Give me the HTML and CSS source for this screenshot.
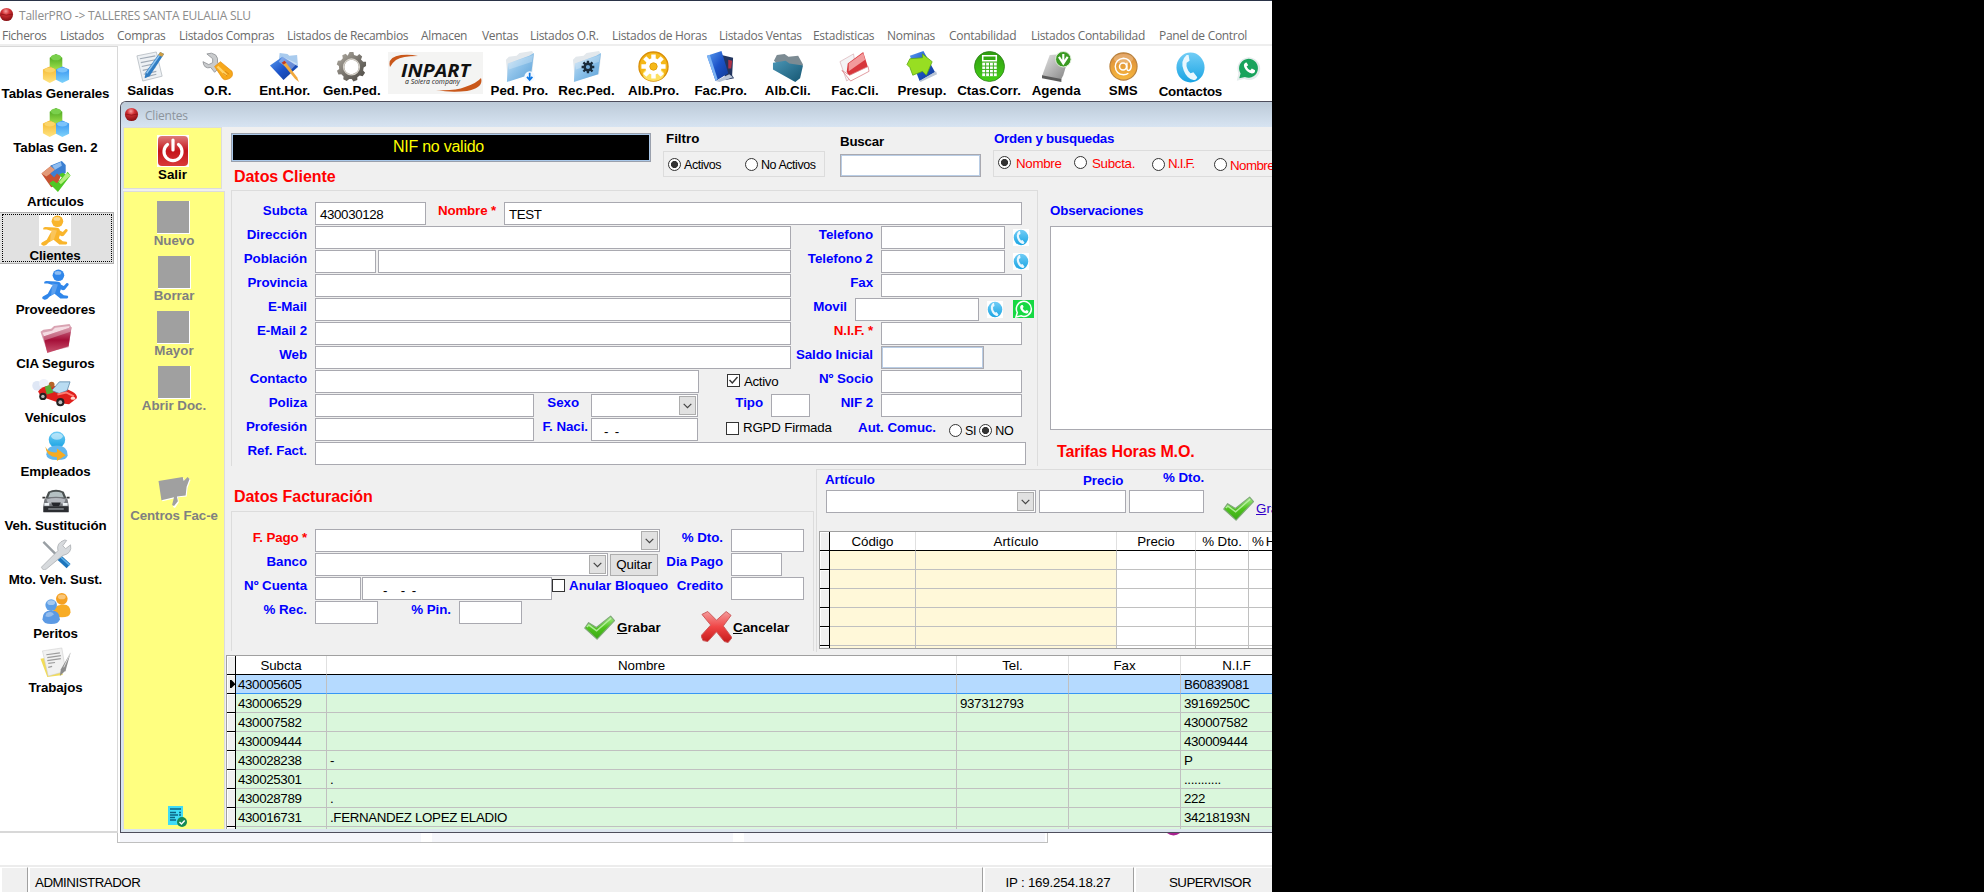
FILE: index.html
```html
<!DOCTYPE html>
<html lang="es">
<head>
<meta charset="utf-8">
<title>TallerPRO -&gt; TALLERES SANTA EULALIA SLU</title>
<link rel="stylesheet" href="styles.css">
</head>
<body>
<svg class="defs" width="0" height="0" aria-hidden="true">
  <defs>
    <radialGradient id="red" cx=".45" cy=".25" r=".7"><stop offset="0" stop-color="#f7a0a0"/><stop offset=".4" stop-color="#d22f33"/><stop offset="1" stop-color="#8c1216"/></radialGradient>
    <linearGradient id="green" x2="0" y2="1"><stop offset="0" stop-color="#3f9e1c"/><stop offset="1" stop-color="#a5e64e"/></linearGradient>
    <linearGradient id="tick" x2="0" y2="1"><stop offset="0" stop-color="#a6e98c"/><stop offset=".5" stop-color="#4fc41d"/><stop offset="1" stop-color="#3aa816"/></linearGradient>
    <linearGradient id="yellow" x2="0" y2="1"><stop offset="0" stop-color="#f4b52b"/><stop offset="1" stop-color="#ffe481"/></linearGradient>
    <linearGradient id="blue" x2="0" y2="1"><stop offset="0" stop-color="#2f8df0"/><stop offset="1" stop-color="#7fd3fb"/></linearGradient>
    <linearGradient id="sky" x2="0" y2="1"><stop offset="0" stop-color="#72cdf6"/><stop offset="1" stop-color="#19a4e3"/></linearGradient>
    <linearGradient id="folder" x1="0" x2="1" y2="1"><stop offset="0" stop-color="#cfe4f5"/><stop offset=".45" stop-color="#8fc3ea"/><stop offset="1" stop-color="#5a9fd6"/></linearGradient>
    <linearGradient id="navy" x2="1" y2="1"><stop offset="0" stop-color="#5b9df0"/><stop offset=".5" stop-color="#1c53c9"/><stop offset="1" stop-color="#123a91"/></linearGradient>
    <linearGradient id="teal" x2="1" y2="1"><stop offset="0" stop-color="#4a95b5"/><stop offset="1" stop-color="#155672"/></linearGradient>
    <linearGradient id="grey" x2="1" y2="1"><stop offset="0" stop-color="#e6e6e6"/><stop offset="1" stop-color="#7e7e7e"/></linearGradient>
    <linearGradient id="metal" x2="1" y2="1"><stop offset="0" stop-color="#b5b0a6"/><stop offset=".5" stop-color="#77736c"/><stop offset="1" stop-color="#4a4843"/></linearGradient>
    <linearGradient id="wine" x2="0" y2="1"><stop offset="0" stop-color="#c9728c"/><stop offset=".5" stop-color="#a50f38"/><stop offset="1" stop-color="#c9536f"/></linearGradient>
    <linearGradient id="crimson" x2="0" y2="1"><stop offset="0" stop-color="#f49c9c"/><stop offset=".5" stop-color="#f04545"/><stop offset="1" stop-color="#c41a1a"/></linearGradient>
    <linearGradient id="power" x2="0" y2="1"><stop offset="0" stop-color="#dd7a7a"/><stop offset=".5" stop-color="#c4141a"/><stop offset="1" stop-color="#d83a3a"/></linearGradient>
    <linearGradient id="leaf" x2="0" y2="1"><stop offset="0" stop-color="#2f9c10"/><stop offset="1" stop-color="#43cf16"/></linearGradient>
    <linearGradient id="amber" x2="0" y2="1"><stop offset="0" stop-color="#d9893a"/><stop offset="1" stop-color="#f7b73c"/></linearGradient>
    <symbol id="orb" viewBox="0 0 16 16"><circle cx="8" cy="8" r="7" fill="url(#red)"/><path d="M2 7.500Q8 10 14 7.500" stroke="#7b1013" stroke-width=".7" fill="none"/></symbol>
    <symbol id="cubes" viewBox="0 0 32 32">
      <path d="M9.500 5 16 1l6.500 4v9L16 18.500 9.500 14z" fill="url(#green)"/><ellipse cx="16" cy="4.500" rx="5.500" ry="3" fill="#7ad04c"/>
      <path d="M2.500 17 9.500 14l6.500 3v10.500L9.500 31 2.500 27z" fill="url(#yellow)"/><ellipse cx="9.500" cy="17.500" rx="5.500" ry="2.600" fill="#fbd56a"/>
      <path d="M16 17 22.500 14l7 3v10.500L22.500 31 16 27.500z" fill="url(#blue)"/><ellipse cx="22.500" cy="17.500" rx="5.500" ry="2.600" fill="#7cc3fb"/>
    </symbol>
    <symbol id="puzzle" viewBox="0 0 32 32">
      <path d="M1 13 12 4l5 6 5 3-5 12-6 2z" fill="#c65131"/><path d="M1 13 12 4l4 5-10 7z" fill="#e39a78"/>
      <path d="M10 5 22 0l4 4v8l-5 4-4-3-3 4-4-4 5-4z" fill="#3b7fd2"/><path d="m12 5 9-4 1 4-7 4z" fill="#8fbdf0"/>
      <path d="M31 15 18 32l-9-9 4-3 4 3 5-6-3-3 4-2 3 2 2-3z" fill="#4fc824"/><path d="m31 15-4-3-8 10 2 2z" fill="#b5ef7f"/>
    </symbol>
    <symbol id="man" viewBox="0 0 32 32">
      <circle cx="18.500" cy="6.500" r="6"/><path d="M4 15q-1-2 2-2.500l10 .5q5 0 5 3l3 1.500 3-3q2.500 0 2 2l-4 5q-2 1-4-.5l-1 3 4 3 4 .5q1.500 2-.5 3h-7l-6-5-5 3q-3 4-6 3-3-1-1-3l5-3 5-9-5-1.500z"/>
      <ellipse cx="18" cy="4" rx="3.500" ry="2" fill="#fff" opacity=".45"/><path d="M12 15l6 1-3 9-4 2z" fill="#fff" opacity=".22"/>
    </symbol>
    <symbol id="winefolder" viewBox="0 0 32 32"><path d="M0 9 3 7l8-1 3-3 16-2 2 4-3 20-22 5z" fill="#d9a3b2"/><path d="m2 10 10-2 3-3 15-2-1 4L4 14z" fill="#f4dce3"/><path d="M3 14 32 4l-3 20L7 31z" fill="url(#wine)"/><path d="M3 14 32 4l-1 5L4 18z" fill="#fff" opacity=".3"/></symbol>
    <symbol id="redcar" viewBox="0 0 48 32"><circle cx="5" cy="9" r="5" fill="#dfe7f5"/><circle cx="12" cy="7" r="5" fill="#eef2fa"/><path d="M6 15q4-6 13-6l12 1 10 5q6 3 5 7l-8 6-9-1-20-7z" fill="#df1f1c"/><path d="m20 14 8-9 11 0-3 9-8 3z" fill="#b9dcf2" stroke="#5b86a8" stroke-width=".8"/><circle cx="20" cy="8" r="3" fill="#b5652b"/><path d="m13 10 5-2 4 8-7 2z" fill="#58ad36"/><path d="m26 18 9-2 8 4" stroke="#ff7c72" fill="none" stroke-width="2"/><circle cx="11" cy="20" r="3.800" fill="#222"/><circle cx="11" cy="20" r="1.800" fill="#bbb"/><circle cx="29" cy="26" r="4.200" fill="#222"/><circle cx="29" cy="26" r="2" fill="#bbb"/><ellipse cx="42" cy="22" rx="2.500" ry="1.600" fill="#ffd9d0"/></symbol>
    <symbol id="employee" viewBox="0 0 32 32"><circle cx="17" cy="9" r="8.500" fill="url(#sky)"/><ellipse cx="17" cy="5.500" rx="6" ry="3.500" fill="#fff" opacity=".5"/><path d="M6 24q0-9 11-9t11 10q0 5-11 5T6 24z" fill="#63b7ee"/><path d="M5 16q3 7 12 6v-4l9 7-9 6v-4Q6 27 5 16z" fill="#f6ab23"/></symbol>
    <symbol id="greycar" viewBox="0 0 32 32"><path d="M8 7q8-4 16 0l3 7H5z" fill="#4a5050"/><path d="M10 8q6-2 12 0l2 5H8z" fill="#b4c0c2"/><path d="M4 15q2-3 12-3t12 3l1 6v7H3v-7z" fill="#74777c"/><path d="M6 15q10-3 20 0l-2 4H8z" fill="#b4b8be"/><path d="M11 18h10l-2 4h-6z" fill="#24262b"/><path d="M3 22h26v6H3z" fill="#2b2d31"/><path d="M4 18.500h5v3H4zm19 0h5v3h-5z" fill="#edf2f5"/><path d="M2 12h3v2H2zm25 0h3v2h-3z" fill="#333"/><path d="M8 24h16v1.500H8z" fill="#8b8f94"/></symbol>
    <symbol id="tools" viewBox="0 0 32 32"><path d="m3 3 15 15" stroke="#999fa4" stroke-width="2.500"/><path d="m18 18 11 10" stroke="#1d75bd" stroke-width="6"/><path d="m19 17 11 10" stroke="#5fb0e6" stroke-width="1.500"/><path d="M18 12q-2-8 7-11l2 .500-4 5.500 3 3 5-4q2 9-8 11L6 31q-4 2-5-2z" fill="#d7dadd" stroke="#a9adb1" stroke-width=".8"/></symbol>
    <symbol id="experts" viewBox="0 0 32 32"><circle cx="22" cy="6" r="6" fill="#f5a021"/><ellipse cx="22" cy="4" rx="4" ry="2.500" fill="#fff" opacity=".4"/><path d="M13 19q0-6 9-7t9 8q-1 5-9 5t-9-6z" fill="#f8ac25"/><circle cx="11" cy="12.500" r="6" fill="#5e9fe6"/><ellipse cx="11" cy="10" rx="4" ry="2.500" fill="#fff" opacity=".45"/><path d="M2 27q0-9 9-9t9 9q-1 5-9 5t-9-5z" fill="#5c9ae4"/><path d="M6 21q5-3 8 1-4 4-9 2z" fill="#fff" opacity=".35"/></symbol>
    <symbol id="jobs" viewBox="0 0 32 32"><path d="m0 12 18-3 5 20-16 2z" fill="#f2dc58"/><path d="m2 4 20-3 4 24-18 5z" fill="#f1f1f1" stroke="#cfcfcf" stroke-width=".6"/><path d="m6 8 14-2M7 11l14-2M7 14l14-2M8 17l7-1M8 21l4-1" stroke="#9c9c9c" fill="none" stroke-width="1.300"/><path d="m31 6-5 18-6 6 1-7z" fill="#8c8c8c"/><path d="m31 6-7 15" stroke="#ddd"/></symbol>
    <symbol id="note" viewBox="0 0 32 32"><path d="m2 5 20-4 6 25-20 5z" fill="#eef1f4" stroke="#b3b9c0" stroke-width=".8"/><path d="m5 8 16-3M6 12l15-3M7 16l14-3M8 20l13-3M9 24l13-3M10 27l12-3" stroke="#9fa9b5" stroke-width="1.200"/><path d="m26 1 4 2-15 23-5 2 1-6z" fill="#2f7cc2"/><path d="m27 2-15 21" stroke="#91c5ef" stroke-width="1.500"/><path d="m26 1 4 2-2 3-4-2z" fill="#cf9f45"/></symbol>
    <symbol id="wrench" viewBox="0 0 32 32"><path d="M5 3q5-2 9 1 3 3 2 8l4 3-7 7-4-5Q2 19 1 11l6 3 4-2 0-4z" fill="#c9cbcd" stroke="#898c90" stroke-width=".8"/><path d="m13 16 6-5 12 10q2 6-4 8-4 2-6-1z" fill="#f7a81b" stroke="#e18d10" stroke-width=".7"/><path d="m16 16 9 9" stroke="#ffd46b" stroke-width="2.500"/><path d="m24 21 4 3m-6-1 4 3" stroke="#d98410" stroke-width="1"/></symbol>
    <symbol id="entry" viewBox="0 0 32 32"><path d="m11 2 8 1 2 2 8-1 1 13-12 8-9-5z" fill="#a9cbee"/><path d="m1 15 13-9 16 10-15 14z" fill="url(#navy)"/><path d="m14 6 15 7-7 7-12-9z" fill="#fff" opacity=".35"/><path d="m16 10 13 17 2 5-4-3-13-16z" fill="#f2a93c"/><path d="m16 10-3 2 2 2 3-2z" fill="#c43b25"/></symbol>
    <symbol id="gear" viewBox="0 0 32 32"><path fill-rule="evenodd" d="m14 1 4 0 .6 3 3.200 1.200L24 3l3 2.800-1.200 2.900L28 11h3v4.500L28.500 17 28 20l2 2.500-2.500 3.500-3-.8-2.500 2L22 30l-4 1.500-1.800-2.500h-2.400L11 31l-3.500-1.800.3-3L5.500 24l-3 .2L1 20.500 3.300 18.500 3 15.500.8 14 2 10l3-.2L7 7.500 6.500 4.500 10 2.800 12 5zM16 9a7.500 7.500 0 1 0 .1 15A7.500 7.500 0 0 0 16 9z" fill="url(#metal)"/><circle cx="16" cy="16.500" r="8.200" fill="none" stroke="#d5d1c9" stroke-width="1.400"/></symbol>
    <symbol id="ordfolder" viewBox="0 0 32 32"><path d="m2 9 3-3 8-1 3-3 13-2 2 4-2 20-25 7z" fill="#e3e8ec"/><path d="m4 13 22-8 5-3-3 22-25 8z" fill="url(#folder)"/><path d="m4 13 26-9-1 7-24 8z" fill="#fff" opacity=".25"/></symbol>
    <symbol id="minigear" viewBox="0 0 16 16"><path d="M8 1v14M1 8h14M3 3l10 10M13 3 3 13" stroke="#182a3a" stroke-width="2.600"/><circle cx="8" cy="8" r="3.600" fill="#6fa9d8" stroke="#182a3a" stroke-width="2.600"/></symbol>
    <symbol id="sungear" viewBox="0 0 32 32"><circle cx="16" cy="16" r="15" fill="#f5b818" stroke="#d98f08" stroke-width="1.400"/><ellipse cx="16" cy="24" rx="11" ry="7" fill="#fde060"/><path d="M16 3.500v25M3.500 16h25M7 7l18 18M25 7 7 25" stroke="#fff" stroke-width="4.600"/><circle cx="16" cy="16" r="8.500" fill="#fff"/><circle cx="16" cy="16" r="3.800" fill="#f5b818" stroke="#e2a010"/></symbol>
    <symbol id="bluebooks" viewBox="0 0 32 32"><path d="m17 4 12 3-1 18 2 3-9 2z" fill="#22355f"/><path d="m24 9 4 1-1 8-3 0z" fill="#ae3347"/><path d="m2 5 15-5 7 23-13 8z" fill="url(#navy)"/><path d="m2 5 3-1 8 25-2 2z" fill="#7db4f4"/><path d="m11 31 14-7 4 3-14 5z" fill="#b9c5d6"/></symbol>
    <symbol id="tealfolder" viewBox="0 0 32 32"><path d="m2 10 3-6 8-1 4 3 10-1 5 9-8 16z" fill="#7c8b93"/><path d="m1 12 13-2 4 3 14 2-3 13-5 4L1 19z" fill="url(#teal)"/></symbol>
    <symbol id="redfolder" viewBox="0 0 32 32"><path d="m1 11 14-8 3 20-10 8z" fill="#f4f4f6" stroke="#d9aeb3" stroke-width=".7"/><path d="m8 21 1-8L25 1l5 16-19 12z" fill="#d7363c"/><path d="m10 13 15-11 2 7-17 12z" fill="#f29b9c"/><path d="m3 20 8 5 19-9 1 5-19 10z" fill="#fff" stroke="#d98087" stroke-width=".8"/></symbol>
    <symbol id="quote" viewBox="0 0 32 32"><path d="m4 5 14-5 12 22-16 9z" fill="url(#navy)"/><path d="m14 31 17-10 1 3-17 8z" fill="#b9c5d6"/><path d="m1 14 3-6 13-1 0-4 10 8-6 14-4-4-10 4-3-8z" fill="#98de22" stroke="#5ba713" stroke-width=".8"/></symbol>
    <symbol id="calc" viewBox="0 0 32 32"><circle cx="16" cy="16" r="15.500" fill="url(#leaf)" stroke="#2b7d17" stroke-width=".8"/><path d="M9 5h14v5H9z" fill="none" stroke="#fff" stroke-width="1.600"/><path d="M8.500 12h15v14h-15z" fill="#fff"/><path d="M12 12v14m4-14v14m4-14v14M8 15.500h16m-16 3.500h16m-16 3.500h16" stroke="#37ab18"/></symbol>
    <symbol id="drive" viewBox="0 0 32 32"><path d="m9 4 15-1 5 2-6 20-3 6L1 26z" fill="url(#grey)"/><path d="m1 25 20 4 0 3-20-4z" fill="#5a5a5a"/><circle cx="23" cy="8.500" r="8" fill="#3a9a22" stroke="#e2eedd"/><path d="m18.500 6 4.500 7 4.500-7M23 3v9" stroke="#fff" stroke-width="2.200" fill="none"/></symbol>
    <symbol id="at" viewBox="0 0 32 32"><circle cx="16" cy="16" r="14" fill="url(#amber)" stroke="#b9803b" stroke-width="1.200"/><ellipse cx="16" cy="8" rx="10" ry="5" fill="#fff" opacity=".25"/><circle cx="15.500" cy="16" r="3.600" fill="none" stroke="#fff" stroke-width="1.600"/><path d="M19.500 12v6q0 2.500 2.500 2 2-1 2-5-1-7-8-7.500-8 1-8.500 8.500.5 8 8.500 8.500 3 0 5-1.500" fill="none" stroke="#fff" stroke-width="1.500"/></symbol>
    <symbol id="phone" viewBox="0 0 32 32"><ellipse cx="16" cy="16" rx="14.500" ry="15.500" fill="url(#sky)"/><path d="M12 3Q5 9 9 19q3 8 10 10 3 0 4-3l-4-5-3 1q-5-5-4-11l3-2-1-6z" fill="#e9f7fe"/></symbol>
    <symbol id="wa" viewBox="0 0 32 32"><path d="m1 31 2-9A14 14 0 1 1 10 29z" fill="#e4ecec"/><path d="m4 28 1.600-6A11.600 11.600 0 1 1 11 26.500z" fill="#18a35c"/><path d="M11.500 9q-3 2-1 6 3 6 9 7 4 0 4-4l-4-2-2 2q-3-1-4.500-4.500L15 12l-2-3.500z" fill="#fff"/></symbol>
    <symbol id="wasq" viewBox="0 0 21 18"><path d="M0 0h21v18H0z" fill="#16d943"/><path d="m3 17 1.300-4.500A7.500 7.500 0 1 1 8 15.800z" fill="#16d943" stroke="#fff" stroke-width="1.500"/><path d="M8.500 5q-2 1-1 4 2 4 6 4.500 2 0 2-2.500l-2-1-1.300 1q-2-1-2.500-3l1-1-1-2z" fill="#fff"/></symbol>
    <symbol id="check" viewBox="0 0 32 25"><path d="m.8 13 4-5.500 8 5L27.500.8l4 4.500L13.500 24.500z" fill="url(#tick)" stroke="#7fa878" stroke-width="1.200" stroke-linejoin="round"/><path d="m3 12 2-2 8 6L28 3" stroke="#c6f5b4" stroke-width="1.500" fill="none" opacity=".8"/></symbol>
    <symbol id="cross" viewBox="0 0 32 32"><path d="m1 3 6-3 9 9 10-9 5 4-8 11 9 12-4 5-4-1-8-10-9 10-5-1-2-5 10-11z" fill="url(#crimson)" stroke="#c95a5a" stroke-width="1"/></symbol>
    <symbol id="powerbtn" viewBox="0 0 32 32"><path d="M0 0h32v32H0z" fill="#fff"/><rect x="1" y="1" width="30" height="30" rx="4" fill="url(#power)"/><path d="M10.500 9.500a9 9 0 1 0 11 0" fill="none" stroke="#fff" stroke-width="3.200" stroke-linecap="round"/><path d="M16 5v10" stroke="#fff" stroke-width="3.200" stroke-linecap="round"/></symbol>
    <symbol id="thumb" viewBox="0 0 33 32"><path d="M1 5 26 1l1 4 4-4 2 2-3 8-1 9-9 1 1 5-4 6-2-1 2-9-13 3z" fill="#fff"/><path d="M0 4 25 0l1 4 4-4 2 2-3 8-1 9-9 1 1 5-4 5-2-1 2-8-13 3z" fill="#a0a0a0"/></symbol>
    <symbol id="doc" viewBox="0 0 19 21"><path d="M0 0h15v19H0z" fill="#40dcf6"/><path d="M2 3h11M2 6.500h6M2 9h8M2 11.500h5M2 14h6M11 6.500h2M11 9h2" stroke="#0b6485" stroke-width="1.400"/><circle cx="14" cy="16" r="5" fill="#168a55"/><path d="m11.500 16 2 2 3.200-3.500" stroke="#fff" stroke-width="1.400" fill="none"/></symbol>
    <symbol id="chev" viewBox="0 0 9 6"><path d="m.7.800 3.800 3.900L8.300.800" fill="none" stroke="#444" stroke-width="1.200"/></symbol>
  </defs>
</svg>

<div class="app">
  <header class="titlebar"><svg class="orb"><use href="#orb"/></svg><span>TallerPRO -&gt; TALLERES SANTA EULALIA SLU</span></header>
  <nav class="menu">
    <span>Ficheros</span><span>Listados</span><span>Compras</span><span>Listados Compras</span><span>Listados de Recambios</span><span>Almacen</span><span>Ventas</span><span>Listados O.R.</span><span>Listados de Horas</span><span>Listados Ventas</span><span>Estadisticas</span><span>Nominas</span><span>Contabilidad</span><span>Listados Contabilidad</span><span>Panel de Control</span>
  </nav>

  <div class="main">
    <aside class="sidebar">
      <div class="side"><svg><use href="#cubes"/></svg><b>Tablas Generales</b></div>
      <div class="side"><svg><use href="#cubes"/></svg><b>Tablas Gen. 2</b></div>
      <div class="side"><svg><use href="#puzzle"/></svg><b>Artículos</b></div>
      <div class="side active"><svg class="orange"><use href="#man"/></svg><b>Clientes</b></div>
      <div class="side"><svg class="azure"><use href="#man"/></svg><b>Proveedores</b></div>
      <div class="side"><svg><use href="#winefolder"/></svg><b>CIA Seguros</b></div>
      <div class="side"><svg class="wide"><use href="#redcar"/></svg><b>Vehículos</b></div>
      <div class="side"><svg><use href="#employee"/></svg><b>Empleados</b></div>
      <div class="side"><svg><use href="#greycar"/></svg><b>Veh. Sustitución</b></div>
      <div class="side"><svg><use href="#tools"/></svg><b>Mto. Veh. Sust.</b></div>
      <div class="side"><svg><use href="#experts"/></svg><b>Peritos</b></div>
      <div class="side"><svg><use href="#jobs"/></svg><b>Trabajos</b></div>
    </aside>

    <div class="workspace">
      <div class="toolbar">
        <div class="tool"><svg><use href="#note"/></svg><b>Salidas</b></div>
        <div class="tool"><svg><use href="#wrench"/></svg><b>O.R.</b></div>
        <div class="tool"><svg><use href="#entry"/></svg><b>Ent.Hor.</b></div>
        <div class="tool"><svg><use href="#gear"/></svg><b>Gen.Ped.</b></div>
        <svg class="inpart" viewBox="0 0 95 42">
          <path d="M0 0h95v42H0z" fill="#f4f4f3"/>
          <path d="M2 15Q-1 5 13 3q9-1 17 1Q14 4 8 8q-4 3-6 7z" fill="#c9571a"/>
          <path d="M93 26q3 10-14 13-16 2-31-1 19 1 29-3 12-4 16-9z" fill="#c9571a"/>
          <text x="13" y="25" class="logo-name" textLength="69" lengthAdjust="spacingAndGlyphs">INPART</text>
          <text x="17" y="32" class="logo-sub" textLength="55" lengthAdjust="spacingAndGlyphs">a Solera company</text>
        </svg>
        <div class="tool"><svg viewBox="0 0 32 32"><use href="#ordfolder"/><circle cx="26.500" cy="26.500" r="5.500" fill="#f4f9ff"/><path d="M26.500 22.500v7m-2.800-2.700 2.800 3 2.800-3" stroke="#0c78e6" stroke-width="1.800" fill="none"/></svg><b>Ped. Pro.</b></div>
        <div class="tool"><svg viewBox="0 0 32 32"><use href="#ordfolder"/><use href="#minigear" x="10" y="9" width="15" height="15"/></svg><b>Rec.Ped.</b></div>
        <div class="tool"><svg><use href="#sungear"/></svg><b>Alb.Pro.</b></div>
        <div class="tool"><svg><use href="#bluebooks"/></svg><b>Fac.Pro.</b></div>
        <div class="tool"><svg><use href="#tealfolder"/></svg><b>Alb.Cli.</b></div>
        <div class="tool"><svg><use href="#redfolder"/></svg><b>Fac.Cli.</b></div>
        <div class="tool"><svg><use href="#quote"/></svg><b>Presup.</b></div>
        <div class="tool"><svg><use href="#calc"/></svg><b>Ctas.Corr.</b></div>
        <div class="tool"><svg><use href="#drive"/></svg><b>Agenda</b></div>
        <div class="tool"><svg><use href="#at"/></svg><b>SMS</b></div>
        <div class="tool contacts"><svg><use href="#phone"/></svg><b>Contactos</b></div>
        <svg class="wa-tool"><use href="#wa"/></svg>
      </div>

      <section class="window">
        <div class="wintitle"><svg class="orb"><use href="#orb"/></svg><span>Clientes</span></div>
        <div class="winbody">
          <div class="actions">
            <div class="exit"><svg><use href="#powerbtn"/></svg><b>Salir</b></div>
            <div class="stack">
              <div class="act"><i class="blank"></i><b>Nuevo</b></div>
              <div class="act"><i class="blank"></i><b>Borrar</b></div>
              <div class="act"><i class="blank"></i><b>Mayor</b></div>
              <div class="act"><i class="blank"></i><b>Abrir Doc.</b></div>
              <div class="act efac"><svg><use href="#thumb"/></svg><b>Centros Fac-e</b></div>
              <svg class="doc"><use href="#doc"/></svg>
            </div>
          </div>

          <div class="content">
            <div class="searchbar">
              <div class="status-col"><div class="alert">NIF no valido</div><h2>Datos Cliente</h2></div>
              <div class="filter">
                <b>Filtro</b>
                <div class="box"><i class="radio on"></i><span class="active-opt">Activos</span><i class="radio"></i><span>No Activos</span></div>
              </div>
              <div class="find"><b>Buscar</b><div class="field focus"></div></div>
              <div class="order">
                <b>Orden y busquedas</b>
                <div class="box"><i class="radio on"></i><span class="o1">Nombre</span><i class="radio"></i><span class="o2">Subcta.</span><i class="radio low"></i><span class="o3">N.I.F.</span><i class="radio low"></i><span class="o4">Nombre</span></div>
              </div>
            </div>

            <div class="client">
              <div class="group client-form">
                <div class="row r1"><label>Subcta</label><div class="field">430030128</div><label class="req">Nombre *</label><div class="field">TEST</div></div>
                <div class="row r2"><label>Dirección</label><div class="field"></div><label>Telefono</label><div class="field"></div><svg class="ph"><use href="#phone"/></svg></div>
                <div class="row r3"><label>Población</label><div class="field"></div><div class="field"></div><label>Telefono 2</label><div class="field"></div><svg class="ph"><use href="#phone"/></svg></div>
                <div class="row r4"><label>Provincia</label><div class="field"></div><label>Fax</label><div class="field"></div></div>
                <div class="row r5"><label>E-Mail</label><div class="field"></div><label>Movil</label><div class="field"></div><svg class="ph"><use href="#phone"/></svg><svg class="wasq"><use href="#wasq"/></svg></div>
                <div class="row r4"><label>E-Mail 2</label><div class="field"></div><label class="req nif">N.I.F. *</label><div class="field"></div></div>
                <div class="row r7"><label>Web</label><div class="field"></div><label>Saldo Inicial</label><div class="field focus"></div></div>
                <div class="row r8"><label>Contacto</label><div class="field"></div><div class="chk"><i class="checkbox"><svg viewBox="0 0 11 11"><path d="m1.500 5 2.800 3L9.500 2" fill="none" stroke="#333" stroke-width="1.400"/></svg></i>Activo</div><label>Nº Socio</label><div class="field"></div></div>
                <div class="row r9"><label>Poliza</label><div class="field"></div><label class="sexo">Sexo</label><div class="field combo"><i><svg><use href="#chev"/></svg></i></div><label>Tipo</label><div class="field"></div><label>NIF 2</label><div class="field"></div></div>
                <div class="row r10"><label>Profesión</label><div class="field"></div><label class="naci">F. Naci.</label><div class="field date">-&nbsp; -</div><div class="chk"><i class="checkbox"></i>RGPD Firmada</div><label class="aut">Aut. Comuc.</label><div class="sino"><i class="radio"></i><span>SI</span><i class="radio on"></i><span>NO</span></div></div>
                <div class="row r11"><label>Ref. Fact.</label><div class="field"></div></div>
              </div>
              <div class="notes"><b>Observaciones</b><div class="textarea"></div><h2>Tarifas Horas M.O.</h2></div>
            </div>

            <div class="lower">
              <div class="billing">
                <h2>Datos Facturación</h2>
                <div class="group bill-form">
                  <div class="row b1"><label class="req">F. Pago *</label><div class="field combo"><i><svg><use href="#chev"/></svg></i></div><label>% Dto.</label><div class="field"></div></div>
                  <div class="row b2"><label>Banco</label><div class="field combo"><i><svg><use href="#chev"/></svg></i></div><div class="btn">Quitar</div><label>Dia Pago</label><div class="field"></div></div>
                  <div class="row b3"><label>Nº Cuenta</label><div class="field"></div><div class="field acct">-&nbsp;&nbsp;&nbsp; -&nbsp; -</div><div class="chk bold"><i class="checkbox"></i>Anular Bloqueo</div><label>Credito</label><div class="field"></div></div>
                  <div class="row b4"><label>% Rec.</label><div class="field"></div><label>% Pin.</label><div class="field"></div><div class="save"><svg class="ok"><use href="#check"/></svg><b><u>G</u>rabar</b></div><div class="cancel"><svg class="ko"><use href="#cross"/></svg><b><u>C</u>ancelar</b></div></div>
                </div>
              </div>
              <div class="group rates">
                <div class="rate-labels"><b>Artículo</b><b class="rp">Precio</b><b class="rd">% Dto.</b></div>
                <div class="rate-fields"><div class="field combo"><i><svg><use href="#chev"/></svg></i></div><div class="field"></div><div class="field"></div><div class="link"><svg class="ok"><use href="#check"/></svg><span><u>G</u>rabar</span></div></div>
                <div class="grid rate-grid">
                  <div class="gr head"><i></i><span>Código</span><span>Artículo</span><span>Precio</span><span>% Dto.</span><span class="hours">% H</span></div>
                  <div class="gr"><i></i><span></span><span></span><span></span><span></span><span></span></div>
                  <div class="gr"><i></i><span></span><span></span><span></span><span></span><span></span></div>
                  <div class="gr"><i></i><span></span><span></span><span></span><span></span><span></span></div>
                  <div class="gr"><i></i><span></span><span></span><span></span><span></span><span></span></div>
                  <div class="gr"><i></i><span></span><span></span><span></span><span></span><span></span></div>
                  <div class="gr"><i></i><span></span><span></span><span></span><span></span><span></span></div>
                </div>
              </div>
            </div>

            <div class="grid client-grid">
              <div class="gr head"><i></i><span>Subcta</span><span>Nombre</span><span>Tel.</span><span>Fax</span><span>N.I.F</span></div>
              <div class="gr sel"><i><svg viewBox="0 0 5 8"><path d="M0 0h1.500L5 3.500v1L1.500 8H0z"/></svg></i><span>430005605</span><span></span><span></span><span></span><span>B60839081</span></div>
              <div class="gr"><i></i><span>430006529</span><span></span><span>937312793</span><span></span><span>39169250C</span></div>
              <div class="gr"><i></i><span>430007582</span><span></span><span></span><span></span><span>430007582</span></div>
              <div class="gr"><i></i><span>430009444</span><span></span><span></span><span></span><span>430009444</span></div>
              <div class="gr"><i></i><span>430028238</span><span>-</span><span></span><span></span><span>P</span></div>
              <div class="gr"><i></i><span>430025301</span><span>.</span><span></span><span></span><span>...........</span></div>
              <div class="gr"><i></i><span>430028789</span><span>.</span><span></span><span></span><span>222</span></div>
              <div class="gr"><i></i><span>430016731</span><span>.FERNANDEZ LOPEZ ELADIO</span><span></span><span></span><span>34218193N</span></div>
              <div class="gr"><i></i><span></span><span></span><span></span><span></span><span></span></div>
            </div>
          </div>
        </div>
      </section>
    </div>
  </div>

  <div class="desktop"><div class="strip"><i></i><i></i><i></i></div><svg class="blob" viewBox="0 0 14 3"><path d="M0 0h14q-3 2.500-7 2.500T0 0z" fill="#a8218f"/></svg></div>
  <footer class="statusbar"><span></span><span>ADMINISTRADOR</span><span>IP : 169.254.18.27</span><span>SUPERVISOR</span></footer>
</div>
</body>
</html>
```
FILE: styles.css
```css
* { box-sizing: border-box; }
body { margin: 0; background: #000; width: 1984px; height: 892px; overflow: hidden; font: 13.33px/16px "Liberation Sans", Arial, sans-serif; color: #000; }
.defs { display: block; height: 0; }
svg { display: block; flex: none; }
i { display: block; flex: none; font-style: normal; }
h2 { margin: 0; font-size: 16px; line-height: 20px; color: #f00; font-weight: bold; white-space: nowrap; letter-spacing: -.05px; }

.app { width: 1272px; height: 892px; background: #fff; display: flex; flex-direction: column; overflow: hidden; }
.titlebar { height: 25px; border-top: 1px solid #2a3347; display: flex; align-items: center; padding-top: 6px; font: 12px/16px "Open Sans", sans-serif; color: #8c8c8c; }
.orb { width: 15px; height: 15px; }
.titlebar .orb { margin: -3px 5px 0 -1px; }
.titlebar span { letter-spacing: -.23px; }
.menu { height: 21px; border-bottom: 2px solid #eee; display: grid; grid-template-columns: 58px 57px 62px 108px 134px 61px 48px 82px 107px 94px 74px 62px 82px 128px 100px; padding-left: 2px; font: 12px/22px "Open Sans", sans-serif; letter-spacing: -.3px; color: #6a6a6a; white-space: nowrap; }

.main { height: 787px; display: flex; }
.sidebar { width: 118px; border: 1px solid #d8d8d8; border-left: 0; border-bottom-width: 2px; padding-top: 3px; margin-right: 2px; }
.side { width: 114px; height: 52px; margin: 0 0 2px; display: flex; flex-direction: column; align-items: center; padding: 3px 3px 0 0; letter-spacing: -.1px; }
.side svg { width: 32px; height: 31px; }
.side svg.wide { width: 47px; }
.side b { line-height: 16px; white-space: nowrap; margin-top: 2px; }
.active { background: #e1e1e1; border: 1px solid #adadad; border-left: 0; outline: 1px dotted #000; outline-offset: -3px; padding-top: 2px; }
.active svg { background: #fff; }
.orange { fill: #f9b52c; }
.azure { fill: #2f86ea; }

.workspace { width: 1152px; display: flex; flex-direction: column; }
.toolbar { height: 55px; display: flex; padding-top: 5px; margin-left: -3px; }
.tool { width: 67.100px; flex: none; display: flex; flex-direction: column; align-items: center; }
.tool svg { width: 31px; height: 31px; }
.tool b { margin-top: 1px; line-height: 16px; white-space: nowrap; }
.contacts { padding-top: 1px; letter-spacing: -.2px; }
.inpart { width: 95px; height: 42px; margin: 1px 2.500px 0 3px; }
.logo-name { font: italic bold 18px "Open Sans", sans-serif; fill: #111; }
.logo-sub { font: italic 7.500px "Open Sans", sans-serif; fill: #222; }
.wa-tool { width: 26px; height: 27px; margin: 4px 0 0 12px; }

.window { height: 732px; border: 1px solid #4d4d5c; border-width: 1px 0 1px 1px; border-top-left-radius: 6px; overflow: hidden; background: #f0f0f0; }
.wintitle { height: 25px; display: flex; align-items: center; padding-left: 3px; background: linear-gradient(#bccad8, #d7e4f2); font: 12px/16px "Open Sans", sans-serif; color: #8c949c; letter-spacing: -.2px; }
.wintitle .orb { margin-right: 6px; }
.wintitle span { padding-top: 2px; }
.winbody { height: 705px; display: flex; border-left: 2px solid #d7e4f2; border-bottom: 3px solid #dce6ee; }
.actions { width: 103px; flex: none; }
.exit { width: 99px; height: 62px; background: #ffff80; border: 1px solid #dcdcdc; display: flex; flex-direction: column; align-items: center; padding-top: 7px; }
.exit svg { width: 32px; height: 32px; }
.exit b { line-height: 16px; }
.stack { width: 102px; height: 638px; margin-top: 2px; background: #ffff80; border: 1px solid #dcdcdc; border-width: 1px 1px 0 1px; padding-top: 9px; display: flex; flex-direction: column; align-items: center; }
.act { height: 55px; display: flex; flex-direction: column; align-items: center; color: #808080; }
.act b { line-height: 14px; white-space: nowrap; }
.blank { width: 33px; height: 33px; background: #a0a0a0; border-right: 1px solid #fff; border-bottom: 1px solid #fff; }
.efac { margin-top: 56px; }
.efac svg { width: 33px; height: 31px; }
.efac b { margin-top: 1px; letter-spacing: -.1px; }
.doc { width: 19px; height: 21px; margin: 274px 0 0 6px; }

.content { width: 1046px; flex: none; display: flex; flex-direction: column; height: 702px; overflow: hidden; }
.field { background: #fff; border: 1px solid #a9a9b0; height: 23px; padding: 3px 0 0 4px; line-height: 17px; letter-spacing: -.38px; white-space: pre; min-width: 0; }
.focus { box-shadow: inset 0 0 0 1px #b9cde5; }
.combo { display: flex; justify-content: flex-end; padding: 1px; }
.combo i { width: 17px; height: 19px; background: #e1e1e1; border: 1px solid #adadad; display: flex; align-items: center; justify-content: center; }
.combo svg { width: 9px; height: 6px; }
.radio { width: 13px; height: 13px; border: 1px solid #333; border-radius: 50%; background: #fff; }
.radio.on { background: radial-gradient(circle, #333 0 3.200px, #fff 3.900px); }
.checkbox { width: 13px; height: 13px; border: 1px solid #333; background: #fff; }
.checkbox svg { width: 11px; height: 11px; }
.box { border: 1px solid #dcdcdc; display: flex; align-items: center; }

.searchbar { height: 63px; padding-left: 5px; display: grid; grid-template-columns: 432px 177px 153px 279px; white-space: nowrap; }
.alert { width: 420px; height: 29px; margin-top: 6px; background: #000; border: 1px solid #9aa0ac; box-shadow: inset 0 0 0 1px #a9c8ea; color: #ff0; text-align: center; padding-right: 5px; font-size: 16px; line-height: 26px; letter-spacing: -.25px; }
.status-col h2 { margin: 5px 0 0 3px; }
.filter b { display: block; margin: 4px 0 0 3px; }
.filter .box { width: 162px; height: 26px; margin-top: 4px; padding-left: 4px; font-size: 12.500px; letter-spacing: -.45px; }
.filter span { margin-left: 3px; padding-top: 1px; }
.filter .active-opt { width: 61px; }
.find b { display: block; margin-top: 7px; letter-spacing: -.2px; }
.find .field { width: 141px; margin-top: 4px; }
.order { color: #00f; overflow: hidden; }
.order b { display: block; margin: 4px 0 0 1px; letter-spacing: -.25px; }
.order .box { width: 300px; height: 27px; margin-top: 3px; padding-left: 4px; color: #f00; letter-spacing: -.3px; }
.order span { flex: none; margin-left: 5px; position: relative; top: 0; }
.order .radio { position: relative; top: -1px; }
.order .radio.low { top: 1px; }
.order .o1 { width: 58px; }
.order .o2 { width: 60px; }
.order .o3 { width: 46px; letter-spacing: -.8px; margin-left: 3px; }
.order .o4 { top: 2px; margin-left: 3px; letter-spacing: -.55px; }

.client { height: 276px; flex: none; display: flex; padding-left: 5px; }
.group { border: 1px solid #dcdcdc; border-bottom: 0; }
.client-form { width: 807px; padding-top: 11px; flex: none; }
.row { height: 24px; display: grid; white-space: nowrap; }
label { color: #00f; font-weight: bold; text-align: right; padding-right: 8px; line-height: 17px; letter-spacing: -.05px; }
.req { color: #f00; letter-spacing: -.15px; }
.nif { letter-spacing: -.1px; }
.r1 { grid-template-columns: 83px 111px 78px 518px; }
.r2 { grid-template-columns: 83px 476px 90px 124px 8px 16px; }
.r3 { grid-template-columns: 83px 61px 415px 90px 124px 8px 16px; }
.r3 .field:nth-child(3) { margin-left: 2px; }
.r4 { grid-template-columns: 83px 476px 90px 141px; }
.r5 { grid-template-columns: 83px 476px 64px 124px 8px 16px 10px 21px; }
.r7 { grid-template-columns: 83px 476px 90px 103px; }
.r8 { grid-template-columns: 83px 384px 28px 64px 90px 141px; }
.r9 { grid-template-columns: 83px 219px 57px 107px 73px 39px 71px 141px; }
.r10 { grid-template-columns: 83px 219px 57px 107px 28px 110px 109px 70px; }
.r11 { grid-template-columns: 83px 711px; }
.ph { width: 16px; height: 17px; margin-top: 3px; grid-column: -2; background: #fff; }
.r5 .ph { grid-column: 6; }
.wasq { width: 21px; height: 18px; grid-column: 8; margin-top: 2px; }
.chk { display: flex; align-items: center; gap: 4px; letter-spacing: -.35px; }
.r8 .chk { grid-column: 4; }
.r8 label:nth-of-type(2) { grid-column: 5; }
.r8 .checkbox { margin-top: -3px; }
.r10 .chk { grid-column: 6; margin-top: -4px; letter-spacing: -.2px; }
.sexo { padding-right: 12px; }
.naci { padding-right: 3px; }
.date { padding-left: 12px; padding-top: 4px; }
.aut { line-height: 20px; padding-right: 9px; grid-column: 7; }
.sino { display: flex; align-items: center; gap: 3px; padding: 1px 0 0 4px; font-size: 12.500px; letter-spacing: -.3px; }
.notes { margin-left: 12px; padding-top: 12px; color: #00f; overflow: hidden; width: 222px; }
.notes b { display: block; line-height: 17px; letter-spacing: -.18px; }
.textarea { width: 240px; height: 204px; margin-top: 7px; background: #fff; border: 1px solid #a9a9b0; }
.notes h2 { margin: 12px 0 0 7px; letter-spacing: -.15px; }

.lower { height: 189px; flex: none; display: flex; padding-left: 5px; }
.billing { width: 583px; flex: none; padding-top: 21px; }
.billing h2 { margin-left: 3px; }
.bill-form { height: 140px; margin-top: 4px; padding-top: 17px; }
.b1 { grid-template-columns: 83px 345px 71px 73px; }
.b2 { grid-template-columns: 83px 293px 51px 72px 51px; }
.b3 { grid-template-columns: 83px 46px 191px 117px 62px 73px; }
.b3 .field:nth-child(3) { margin-left: 1px; }
.b4 { grid-template-columns: 83px 63px 81px 63px 62px 117px 96px; }
.btn { width: 48px; height: 22px; margin: 1px 0 0 2px; background: #e1e1e1; border: 1px solid #adadad; text-align: center; line-height: 20px; letter-spacing: -.1px; }
.acct { padding-left: 20px; padding-top: 4px; letter-spacing: -.3px; }
.bold { font-weight: bold; color: #00f; letter-spacing: 0; align-items: flex-start; line-height: 18px; }
.bold .checkbox { margin-top: 2px; }
.save, .cancel { display: flex; align-items: center; height: 34px; }
.save { grid-column: 6; margin-top: 9px; gap: 2px; }
.cancel { grid-column: 7; margin-top: 9px; gap: 1px; }
.save b, .cancel b { padding-top: 2px; }
.ok { width: 31px; height: 25px; }
.ko { width: 31px; height: 32px; }

.rates { width: 470px; height: 183px; margin: 3px 0 0 2px; padding: 0 0 0 2px; flex: none; overflow: hidden; }
.rate-labels { display: grid; grid-template-columns: 258px 80px 50px; padding: 1px 0 0 6px; height: 20px; color: #00f; line-height: 17px; letter-spacing: -.05px; }
.rp { padding-top: 1px; }
.rd { margin-top: -2px; white-space: nowrap; }
.rate-fields { display: grid; grid-template-columns: 210px 87px 75px 80px; column-gap: 3px; padding-left: 7px; }
.link { display: flex; align-items: center; margin: 6px 0 -8px 16px; gap: 2px; color: #3300c8; }
.rate-grid { margin-top: 18px; height: 118px; width: 480px; }
.grid { border: 1px solid #a0a0a0; border-right: 0; background: #fff; overflow: hidden; }
.gr { height: 19px; display: grid; line-height: 17px; white-space: nowrap; }
.gr span { border-right: 1px solid #c0c0c0; border-bottom: 1px solid #c0c0c0; padding-left: 2px; padding-top: 1px; letter-spacing: -.35px; }
.gr i { background: #f0f0f0; border-right: 1px solid #000; border-bottom: 1px solid #000; box-shadow: inset 1px 1px #fff; }
.head span { text-align: center; border-bottom-color: #000; border-right-color: #e0e0e0; padding-left: 0; letter-spacing: -.05px; }
.head .hours { text-align: left; padding-left: 3px; letter-spacing: -.9px; }
.rate-grid .gr { grid-template-columns: 10px 86px 201px 79px 53px 40px; }
.rate-grid .gr:not(.head) span:nth-child(-n+3) { background: #fff8d9; }
.client-grid { height: 174px; flex: none; border-bottom: 0; }
.client-grid .gr { grid-template-columns: 9px 91px 630px 112px 112px 112px; }
.client-grid .gr:not(.head) { background: #daf7dc; }
.client-grid .gr.sel { background: #b5daff; }
.client-grid span:nth-child(n+3) { padding-left: 3px; }
.client-grid .head span { padding-left: 0; }
.client-grid .sel span { border-bottom-color: #3796f6; }
.sel i { display: flex; align-items: center; justify-content: flex-end; }
.sel svg { width: 5px; height: 8px; }

.desktop { height: 32px; display: flex; padding-left: 117px; }
.strip { width: 931px; height: 10px; display: flex; gap: 11px; border: 1px solid #bfbfbf; border-top: 0; padding: 0 2px; }
.strip i { width: 301px; background: #f5f6fb; }
.blob { width: 13px; height: 3px; margin-left: 119px; }
.statusbar { height: 27px; border-top: 2px solid #ececec; background: #f0f0f0; display: grid; grid-template-columns: 28px 955px 151px 138px; line-height: 29px; letter-spacing: -.5px; }
.statusbar span { border-top: 1px solid #fff; border-right: 1px solid #a0a0a0; border-left: 2px solid #fff; text-align: center; }
.statusbar span:nth-child(2) { text-align: left; padding-left: 5px; }
.statusbar span:nth-child(3) { letter-spacing: -.2px; padding-right: 2px; }
.statusbar span:last-child { border-right: 0; padding-left: 12px; }
```
